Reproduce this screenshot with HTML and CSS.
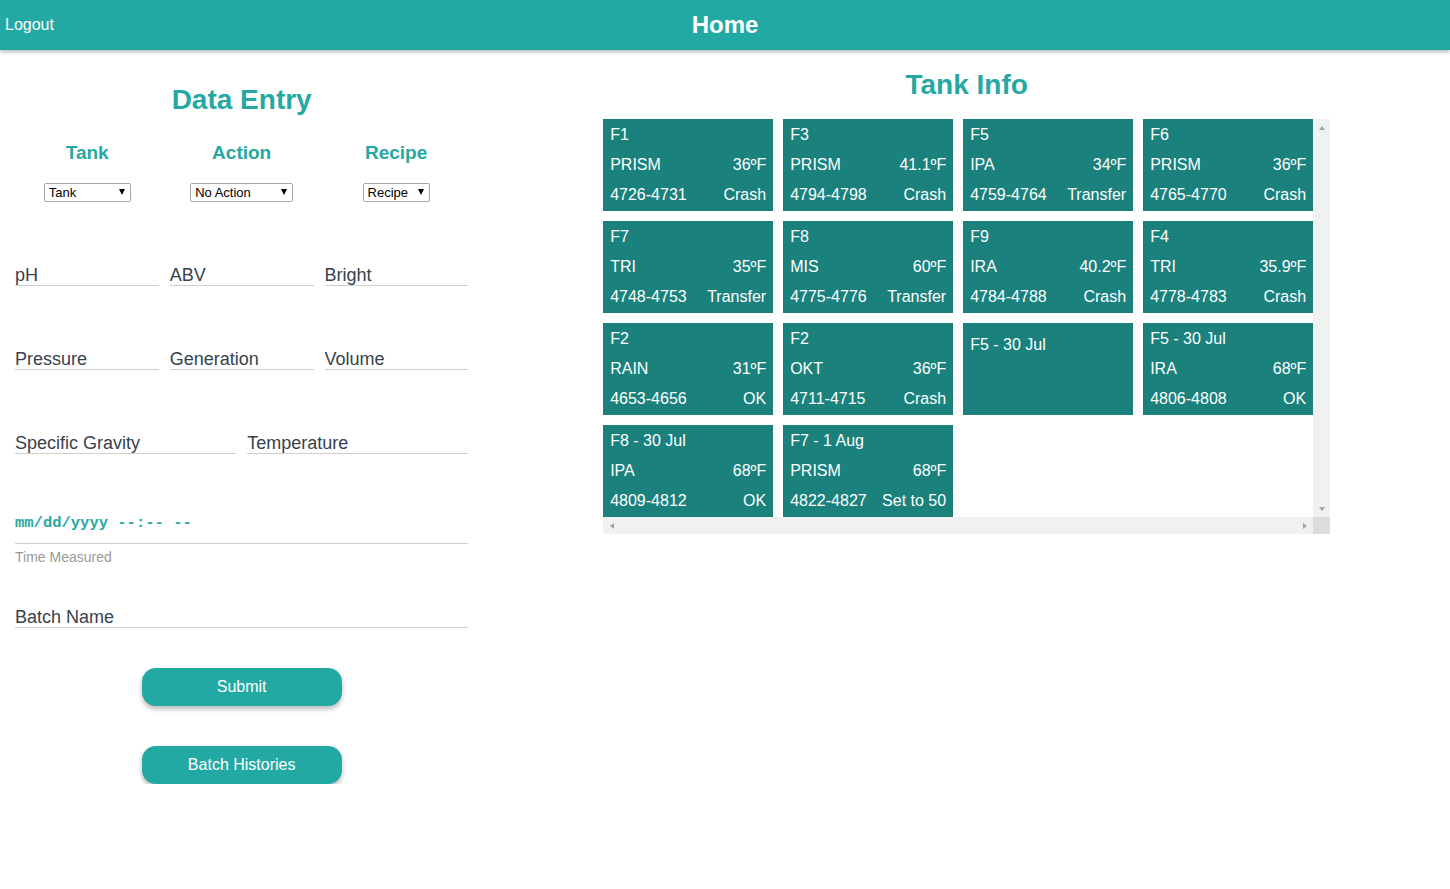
FILE: index.html
```html
<!DOCTYPE html>
<html lang="en">
<head>
<meta charset="utf-8">
<title>Home</title>
<link rel="stylesheet" href="styles.css">
</head>
<body>
<header class="topbar">
  <a class="logout" href="#">Logout</a>
  <h1 class="topbar-title">Home</h1>
  <span></span>
</header>
<main class="page">
  <section class="entry">
    <h2 class="section-title entry-title">Data Entry</h2>
    <div class="selectors">
      <div class="selector">
        <h3 class="selector-title">Tank</h3>
        <span class="select-wrap"><select class="select select-tank"><option>Tank</option></select></span>
      </div>
      <div class="selector">
        <h3 class="selector-title">Action</h3>
        <span class="select-wrap"><select class="select select-action"><option>No Action</option></select></span>
      </div>
      <div class="selector">
        <h3 class="selector-title">Recipe</h3>
        <span class="select-wrap"><select class="select select-recipe"><option>Recipe</option></select></span>
      </div>
    </div>
    <div class="field-row three">
      <input class="field" type="text" placeholder="pH">
      <input class="field" type="text" placeholder="ABV">
      <input class="field" type="text" placeholder="Bright">
    </div>
    <div class="field-row three">
      <input class="field" type="text" placeholder="Pressure">
      <input class="field" type="text" placeholder="Generation">
      <input class="field" type="text" placeholder="Volume">
    </div>
    <div class="field-row two">
      <input class="field" type="text" placeholder="Specific Gravity">
      <input class="field" type="text" placeholder="Temperature">
    </div>
    <div class="datefield">mm/dd/yyyy --:-- --</div>
    <div class="helper">Time Measured</div>
    <input class="field field-full" type="text" placeholder="Batch Name">
    <button class="btn btn-first">Submit</button>
    <button class="btn">Batch Histories</button>
  </section>
  <section class="tanks">
    <h2 class="section-title tanks-title">Tank Info</h2>
    <div class="tank-frame">
      <div class="tank-grid">
        <div class="card"><div class="line">F1</div><div class="line"><span>PRISM</span><span>36ºF</span></div><div class="line"><span>4726-4731</span><span>Crash</span></div></div>
        <div class="card"><div class="line">F3</div><div class="line"><span>PRISM</span><span>41.1ºF</span></div><div class="line"><span>4794-4798</span><span>Crash</span></div></div>
        <div class="card"><div class="line">F5</div><div class="line"><span>IPA</span><span>34ºF</span></div><div class="line"><span>4759-4764</span><span>Transfer</span></div></div>
        <div class="card"><div class="line">F6</div><div class="line"><span>PRISM</span><span>36ºF</span></div><div class="line"><span>4765-4770</span><span>Crash</span></div></div>
        <div class="card"><div class="line">F7</div><div class="line"><span>TRI</span><span>35ºF</span></div><div class="line"><span>4748-4753</span><span>Transfer</span></div></div>
        <div class="card"><div class="line">F8</div><div class="line"><span>MIS</span><span>60ºF</span></div><div class="line"><span>4775-4776</span><span>Transfer</span></div></div>
        <div class="card"><div class="line">F9</div><div class="line"><span>IRA</span><span>40.2ºF</span></div><div class="line"><span>4784-4788</span><span>Crash</span></div></div>
        <div class="card"><div class="line">F4</div><div class="line"><span>TRI</span><span>35.9ºF</span></div><div class="line"><span>4778-4783</span><span>Crash</span></div></div>
        <div class="card"><div class="line">F2</div><div class="line"><span>RAIN</span><span>31ºF</span></div><div class="line"><span>4653-4656</span><span>OK</span></div></div>
        <div class="card"><div class="line">F2</div><div class="line"><span>OKT</span><span>36ºF</span></div><div class="line"><span>4711-4715</span><span>Crash</span></div></div>
        <div class="card card-single"><div class="line">F5 - 30 Jul</div></div>
        <div class="card"><div class="line">F5 - 30 Jul</div><div class="line"><span>IRA</span><span>68ºF</span></div><div class="line"><span>4806-4808</span><span>OK</span></div></div>
        <div class="card"><div class="line">F8 - 30 Jul</div><div class="line"><span>IPA</span><span>68ºF</span></div><div class="line"><span>4809-4812</span><span>OK</span></div></div>
        <div class="card"><div class="line">F7 - 1 Aug</div><div class="line"><span>PRISM</span><span>68ºF</span></div><div class="line"><span>4822-4827</span><span>Set to 50</span></div></div>
      </div>
      <div class="vbar">
        <span class="sb-btn"><span class="arrow arrow-up"></span></span>
        <span class="sb-btn"><span class="arrow arrow-down"></span></span>
      </div>
      <div class="hbar">
        <span class="sb-btn"><span class="arrow arrow-left"></span></span>
        <span class="sb-btn"><span class="arrow arrow-right"></span></span>
      </div>
      <div class="sb-corner"></div>
    </div>
  </section>
</main>
</body>
</html>
```
FILE: styles.css
```css
* { box-sizing: border-box; }

body {
  margin: 0;
  font-family: "Liberation Sans", Arial, sans-serif;
  background: #fff;
  color: #333;
}

.topbar {
  height: 50px;
  background: #23a9a3;
  box-shadow: 0 2px 4px rgba(0, 0, 0, 0.28);
  display: grid;
  grid-template-columns: 1fr auto 1fr;
  align-items: center;
  position: relative;
  z-index: 1;
}

.logout {
  color: #fff;
  text-decoration: none;
  font-size: 16px;
  padding-left: 5px;
  justify-self: start;
}

.topbar-title {
  margin: 0;
  color: #fff;
  font-size: 24px;
  font-weight: bold;
  line-height: 28px;
}

.page {
  display: flex;
  align-items: flex-start;
}

.entry {
  width: 33.3333%;
  padding: 0 15px;
}

.tanks {
  flex: 1;
}

.section-title {
  margin: 0;
  color: #25a8a1;
  font-size: 28px;
  font-weight: bold;
  line-height: 34px;
  text-align: center;
}

.entry-title { margin-top: 33px; }
.tanks-title { margin-top: 18px; }

.selectors {
  display: grid;
  grid-template-columns: repeat(3, 1fr);
  margin: 24px -5px 0;
}

.selector {
  display: flex;
  flex-direction: column;
  align-items: center;
}

.selector-title {
  margin: 0;
  color: #25a8a1;
  font-size: 19px;
  font-weight: bold;
  line-height: 23px;
}

.select-wrap {
  position: relative;
  display: inline-block;
  margin-top: 19px;
}

.select-wrap::after {
  content: "";
  position: absolute;
  right: 6px;
  top: 6px;
  border-left: 3.5px solid transparent;
  border-right: 3.5px solid transparent;
  border-top: 6px solid #000;
  pointer-events: none;
}

.select {
  appearance: none;
  -webkit-appearance: none;
  display: block;
  height: 19px;
  border: 1px solid #a6a6a6;
  border-radius: 2px;
  background: #fff;
  font-family: "Liberation Sans", Arial, sans-serif;
  font-size: 13px;
  color: #000;
  padding: 0 16px 0 4px;
  line-height: 17px;
}

.select-tank { width: 87px; }
.select-action { width: 103px; }
.select-recipe { width: 67px; }

.field-row {
  display: grid;
  gap: 11px;
  margin-top: 60px;
}

.field-row.three { grid-template-columns: repeat(3, 1fr); }
.field-row.two { grid-template-columns: repeat(2, 1fr); }

.field {
  display: block;
  width: 100%;
  height: 24px;
  border: none;
  border-bottom: 1px solid #cfcfcf;
  padding: 4px 0 0;
  font-family: "Liberation Sans", Arial, sans-serif;
  font-size: 18px;
  color: #333;
  background: transparent;
  outline: none;
}

.field::placeholder {
  color: #37424d;
  opacity: 1;
}

.datefield {
  margin-top: 58px;
  line-height: 20px;
  padding-top: 1px;
  padding-bottom: 10px;
  border-bottom: 1px solid #cfcfcf;
  font-family: "Liberation Mono", "Courier New", monospace;
  font-weight: bold;
  font-size: 15.5px;
  color: #25a8a1;
  white-space: pre;
}

.helper {
  margin-top: 5px;
  font-size: 14px;
  line-height: 16px;
  color: #9a9a9a;
}

.field-full { margin-top: 39px; }

.btn {
  display: block;
  width: 200px;
  height: 38px;
  margin: 40px auto 0;
  border: none;
  border-radius: 14px;
  background: #23a9a3;
  color: #fff;
  font-family: "Liberation Sans", Arial, sans-serif;
  font-size: 16px;
  box-shadow: 0 3px 5px rgba(0, 0, 0, 0.28);
}

.tank-frame {
  width: 727px;
  margin: 17px auto 0;
  display: grid;
  grid-template-columns: 710px 17px;
  grid-template-rows: 398px 17px;
}

.tank-grid {
  display: grid;
  grid-template-columns: repeat(4, 170px);
  grid-auto-rows: 92px;
  gap: 10px;
}

.card {
  background: #1a817d;
  color: #fff;
  font-size: 16px;
  padding: 1px 7px 1px 7px;
}

.card-single { padding-top: 7px; }

.line {
  display: flex;
  justify-content: space-between;
  line-height: 30px;
  height: 30px;
  white-space: nowrap;
}

.vbar,
.hbar {
  background: #f1f1f1;
  display: flex;
  justify-content: space-between;
}

.vbar { flex-direction: column; }

.sb-corner { background: #dcdcdc; }

.sb-btn {
  width: 17px;
  height: 17px;
  display: flex;
  align-items: center;
  justify-content: center;
}

.arrow {
  width: 0;
  height: 0;
}

.arrow-up {
  border-left: 3.5px solid transparent;
  border-right: 3.5px solid transparent;
  border-bottom: 4px solid #a3a3a3;
}

.arrow-down {
  border-left: 3.5px solid transparent;
  border-right: 3.5px solid transparent;
  border-top: 4px solid #a3a3a3;
}

.arrow-left {
  border-top: 3.5px solid transparent;
  border-bottom: 3.5px solid transparent;
  border-right: 4px solid #a3a3a3;
}

.arrow-right {
  border-top: 3.5px solid transparent;
  border-bottom: 3.5px solid transparent;
  border-left: 4px solid #a3a3a3;
}
```
